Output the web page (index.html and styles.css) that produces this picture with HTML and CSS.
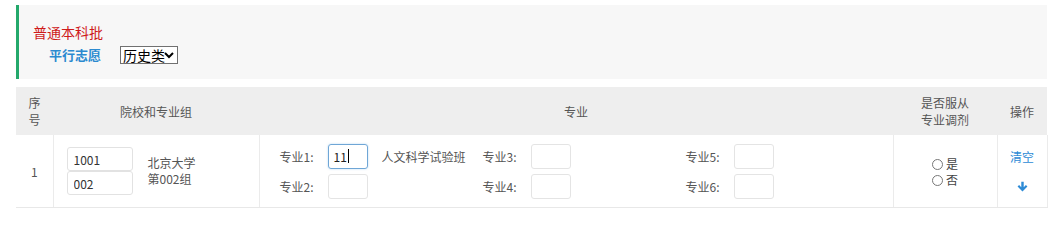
FILE: index.html
```html
<!DOCTYPE html>
<html lang="zh">
<head>
<meta charset="utf-8">
<link rel="stylesheet" href="styles.css">
</head>
<body>
<div class="page">
  <div class="batch">
    <div class="batch-title">普通本科批</div>
    <div class="batch-sub">
      <span class="plan">平行志愿</span>
      <select class="kind"><option>历史类</option></select>
    </div>
  </div>

  <table class="vol">
    <colgroup>
      <col class="c1"><col class="c2"><col class="c3"><col class="c4"><col class="c5">
    </colgroup>
    <thead>
      <tr>
        <th>序<br>号</th>
        <th>院校和专业组</th>
        <th>专业</th>
        <th>是否服从<br>专业调剂</th>
        <th>操作</th>
      </tr>
    </thead>
    <tbody>
      <tr>
        <td class="num">1</td>
        <td>
          <div class="school">
            <div class="codes">
              <input class="code" value="1001">
              <input class="code" value="002">
            </div>
            <div class="sname">北京大学<br>第002组</div>
          </div>
        </td>
        <td>
          <div class="majors">
            <div class="major"><span class="mlabel">专业1:</span><span class="mbox focus">11<span class="caret"></span></span><span class="mname">人文科学试验班</span></div>
            <div class="major"><span class="mlabel">专业3:</span><span class="mbox"></span><span class="mname"></span></div>
            <div class="major"><span class="mlabel">专业5:</span><span class="mbox"></span><span class="mname"></span></div>
            <div class="major"><span class="mlabel">专业2:</span><span class="mbox"></span><span class="mname"></span></div>
            <div class="major"><span class="mlabel">专业4:</span><span class="mbox"></span><span class="mname"></span></div>
            <div class="major"><span class="mlabel">专业6:</span><span class="mbox"></span><span class="mname"></span></div>
          </div>
        </td>
        <td>
          <div class="radios">
            <label class="radio"><span class="dot"></span>是</label>
            <label class="radio"><span class="dot"></span>否</label>
          </div>
        </td>
        <td>
          <div class="ops">
            <a class="clear">清空</a>
            <svg class="down" width="11" height="11" viewBox="0 0 10 10"><path d="M5 9.6 L9.5 5.1 L8.1 3.7 L6.1 5.7 L6.1 0.6 L3.9 0.6 L3.9 5.7 L1.9 3.7 L0.5 5.1 Z" fill="#2d8bd6"/></svg>
          </div>
        </td>
      </tr>
    </tbody>
  </table>
</div>
</body>
</html>
```

FILE: styles.css
```css
html, body {
  margin: 0;
  padding: 0;
  background: #ffffff;
}
body {
  font-family: "Noto Sans CJK SC", "Noto Sans", "Liberation Sans", sans-serif;
  font-size: 12px;
  color: #555;
}
.page {
  padding: 5px 9px 0 16px;
  width: 1031px;
}
.batch {
  height: 74px;
  box-sizing: border-box;
  background: #f7f7f7;
  border-left: 3px solid #23a86b;
  padding: 15px 0 0 14px;
}
.batch-title {
  color: #cf1a1a;
  font-size: 14px;
  line-height: 24px;
}
.batch-sub {
  display: flex;
  align-items: center;
  gap: 19px;
  padding-left: 16px;
}
.plan {
  color: #2b8ad0;
  font-size: 13px;
  font-weight: bold;
  line-height: 22px;
}
.kind {
  -webkit-appearance: none;
  appearance: none;
  font-family: "Noto Sans CJK SC", sans-serif;
  font-size: 14px;
  height: 18px;
  width: 58px;
  box-sizing: border-box;
  padding: 0 0 0 2px;
  border: 1px solid #707070;
  border-radius: 0;
  background-color: #fff;
  background-image: url("data:image/svg+xml;utf8,<svg xmlns='http://www.w3.org/2000/svg' width='10' height='8' viewBox='0 0 10 8'><path d='M1 2 L5 6 L9 2' fill='none' stroke='black' stroke-width='2'/></svg>");
  background-repeat: no-repeat;
  background-position: right 3px center;
  color: #000;
  line-height: 16px;
  outline: none;
}
.vol {
  margin-top: 8px;
  width: 1031px;
  border-collapse: collapse;
  table-layout: fixed;
}
.c1 { width: 37px; }
.c2 { width: 206px; }
.c3 { width: 634px; }
.c4 { width: 104px; }
.c5 { width: 50px; }
.vol th {
  background: #eeeeee;
  height: 48px;
  padding: 0;
  font-weight: normal;
  color: #555;
  line-height: 17px;
  text-align: center;
}
.vol td {
  height: 72px;
  padding: 0;
  border-bottom: 1px solid #e8e8e8;
  border-left: 1px solid #ebebeb;
  vertical-align: middle;
}
.vol td:first-child { border-left: none; }
.vol td:last-child { border-right: 1px solid #ebebeb; }
.num { text-align: center; }
.school {
  display: flex;
  align-items: center;
  gap: 15px;
  padding-left: 13px;
}
.codes {
  display: flex;
  flex-direction: column;
}
.code {
  width: 66px;
  height: 24px;
  box-sizing: border-box;
  border: 1px solid #e2e2e2;
  border-radius: 3px;
  padding: 0 6px;
  font-family: "Noto Sans CJK SC", sans-serif;
  font-size: 12px;
  color: #333;
  outline: none;
}
.sname {
  line-height: 16px;
  color: #555;
}
.majors {
  display: grid;
  grid-template-columns: 203px 203px 203px;
  grid-auto-rows: 25px;
  row-gap: 5px;
  padding-left: 20px;
}
.major {
  display: flex;
  align-items: center;
}
.mlabel {
  width: 48px;
  color: #555;
}
.mbox {
  width: 40px;
  height: 25px;
  box-sizing: border-box;
  border: 1px solid #e4e4e4;
  border-radius: 3px;
  display: flex;
  align-items: center;
  padding-left: 5px;
  color: #222;
  font-size: 12px;
}
.mbox.focus {
  border-color: #6fa6d6;
  box-shadow: 0 0 2px rgba(102,175,233,.5);
}
.caret {
  display: inline-block;
  width: 1px;
  height: 14px;
  background: #000;
  margin-left: 1px;
}
.mname {
  margin-left: 14px;
  color: #555;
}
.radios {
  display: flex;
  flex-direction: column;
  align-items: center;
  line-height: 16px;
  padding-top: 2px;
}
.radio {
  display: flex;
  align-items: center;
  gap: 3px;
  color: #444;
}
.dot {
  width: 9px;
  height: 9px;
  border: 1px solid #777;
  border-radius: 50%;
}
.ops {
  display: flex;
  flex-direction: column;
  align-items: center;
  gap: 16px;
  padding-bottom: 2px;
}
.clear {
  color: #2d8bd6;
  cursor: pointer;
}
```
